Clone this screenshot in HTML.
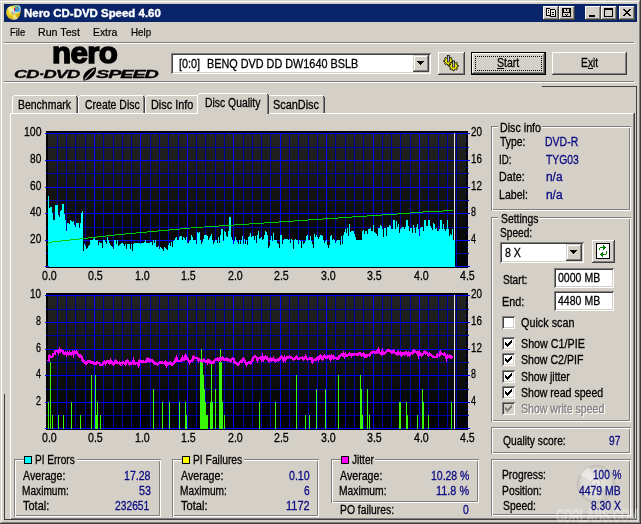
<!DOCTYPE html>
<html lang="en"><head><meta charset="utf-8"><title>Nero CD-DVD Speed 4.60</title>
<style>
html,body{margin:0;padding:0;background:#D4D0C8}
body{width:641px;height:524px;overflow:hidden}
#win{will-change:transform;position:relative;width:641px;height:524px;background:#D4D0C8;overflow:hidden;font-family:"Liberation Sans",sans-serif}
#win div{position:absolute;box-sizing:border-box}
.t{position:absolute;white-space:pre;transform-origin:0 0;display:block;color:#000}
.ms{font-size:12.5px;line-height:16px;height:16px;-webkit-text-stroke:.3px}
.tah{font-size:11px;line-height:14px;height:14px;-webkit-text-stroke:.2px}
.tahb{font-size:11px;font-weight:bold;line-height:14px;height:14px;-webkit-text-stroke:.35px #fff}
.ax{font-size:12.5px;line-height:16px;height:16px;-webkit-text-stroke:.3px}
svg{position:absolute;display:block}
.wm{font-size:19px;font-weight:bold;line-height:22px;height:22px;color:#fff;opacity:.3;letter-spacing:0;-webkit-text-stroke:.6px #fff}
.nero{font-size:30px;font-weight:bold;line-height:33px;height:33px;letter-spacing:-0.6px;-webkit-text-stroke:1.5px #000}
.cds{font-size:11px;font-weight:bold;font-style:italic;line-height:14px;height:14px;letter-spacing:-.6px;-webkit-text-stroke:.3px}
</style></head>
<body>
<div id="win">
<div style="left:0px;top:1px;width:641px;height:1px;background:#fff"></div>
<div style="left:1px;top:1px;width:1px;height:522px;background:#fff"></div>
<div style="left:639px;top:1px;width:1px;height:522px;background:#808080"></div>
<div style="left:1px;top:522px;width:639px;height:1px;background:#808080"></div>
<div style="left:640px;top:0px;width:1px;height:524px;background:#404040"></div>
<div style="left:0px;top:523px;width:641px;height:1px;background:#404040"></div>
<div style="left:4px;top:4px;width:633px;height:18px;background:#0A246A"></div>
<span id="t0" class="t tahb" style="left:23.60px;top:6px;color:#fff;transform:scaleX(1.0411);">Nero CD-DVD Speed 4.60</span>
<svg width="18" height="18" viewBox="0 0 18 18" style="left:5px;top:4px">
<defs><radialGradient id="gd" cx="0.4" cy="0.4" r="0.7"><stop offset="0" stop-color="#fff6a8"/><stop offset="0.45" stop-color="#e8d020"/><stop offset="1" stop-color="#b89808"/></radialGradient></defs>
<circle cx="8.3" cy="8.6" r="7.2" fill="url(#gd)"/>
<path d="M8.3,8.6L2,5A7.2,7.2 0 0 1 6,2Z" fill="#fffbd0" opacity=".7"/>
<path d="M8.3,8.6L13,14.5A7.2,7.2 0 0 1 8,15.8Z" fill="#fff8c0" opacity=".6"/>
<circle cx="8.3" cy="8.6" r="1.6" fill="#c8c8d0" stroke="#8a8a98" stroke-width=".6"/>
<circle cx="11.7" cy="5.1" r="4" fill="#f4f4f4"/>
<circle cx="11.9" cy="5.3" r="3" fill="#28a0e8"/>
<path d="M9.2,3.2A3.2,3.2 0 0 1 13.6,2.6" stroke="#40b040" stroke-width="1.2" fill="none"/>
<path d="M9.6,6.8L9.4,3.6" stroke="#d01010" stroke-width="1.2"/>
<path d="M10.6,2.8L13.4,6.6" stroke="#e06060" stroke-width=".9"/>
<circle cx="9.3" cy="3.4" r=".8" fill="#f0e020"/>
</svg>
<div style="left:543px;top:6px;width:16px;height:14px;background:#D4D0C8;box-shadow:inset -1px -1px 0 #404040, inset 1px 1px 0 #fff, inset -2px -2px 0 #808080, inset 2px 2px 0 #D4D0C8"><svg width="16" height="14" viewBox="0 0 16 14" style="left:0;top:0" shape-rendering="crispEdges"><path d="M3.5,2.500h3l1,1v6h-4zM7.5,3.500h4l1,1v6h-5z" fill="#E8E6E0" stroke="#000" stroke-width="1"/><rect x="5" y="4" width="1" height="1"/><rect x="5" y="6" width="1" height="1"/><rect x="9" y="6" width="2" height="1"/><rect x="9" y="8" width="2" height="1"/></svg></div>
<div style="left:559px;top:6px;width:16px;height:14px;background:#D4D0C8;box-shadow:inset -1px -1px 0 #404040, inset 1px 1px 0 #fff, inset -2px -2px 0 #808080, inset 2px 2px 0 #D4D0C8"><svg width="16" height="14" viewBox="0 0 16 14" style="left:0;top:0" shape-rendering="crispEdges"><rect x="3" y="2" width="9" height="9" fill="#000"/><rect x="5" y="3" width="5" height="3" fill="#D4D0C8"/><rect x="7" y="3" width="1" height="2" fill="#000"/><rect x="4" y="7" width="7" height="3" fill="#D4D0C8"/><rect x="6" y="8" width="1" height="1" fill="#000"/><rect x="7" y="9" width="1" height="1" fill="#000"/><rect x="8" y="8" width="1" height="1" fill="#000"/></svg></div>
<div style="left:585px;top:6px;width:16px;height:14px;background:#D4D0C8;box-shadow:inset -1px -1px 0 #404040, inset 1px 1px 0 #fff, inset -2px -2px 0 #808080, inset 2px 2px 0 #D4D0C8"><svg width="16" height="14" viewBox="0 0 16 14" style="left:0;top:0" shape-rendering="crispEdges"><rect x="4" y="9" width="6" height="2" fill="#000"/></svg></div>
<div style="left:601px;top:6px;width:16px;height:14px;background:#D4D0C8;box-shadow:inset -1px -1px 0 #404040, inset 1px 1px 0 #fff, inset -2px -2px 0 #808080, inset 2px 2px 0 #D4D0C8"><svg width="16" height="14" viewBox="0 0 16 14" style="left:0;top:0" shape-rendering="crispEdges"><rect x="3" y="2" width="9" height="9" fill="#000"/><rect x="4" y="4" width="7" height="6" fill="#D4D0C8"/></svg></div>
<div style="left:619px;top:6px;width:16px;height:14px;background:#D4D0C8;box-shadow:inset -1px -1px 0 #404040, inset 1px 1px 0 #fff, inset -2px -2px 0 #808080, inset 2px 2px 0 #D4D0C8"><svg width="16" height="14" viewBox="0 0 16 14" style="left:0;top:0" shape-rendering="crispEdges"><path d="M4,3h2v1h1v1h2v-1h1v-1h2v1h-1v1h-1v1h-1v1h1v1h1v1h1v1h-2v-1h-1v-1h-2v1h-1v1h-2v-1h1v-1h1v-1h1v-1h-1v-1h-1v-1h-1z" fill="#000"/></svg></div>
<span id="t1" class="t nero" style="left:51.96px;top:35.8px;transform:scaleX(1.0406);">nero</span>
<span id="t2" class="t cds" style="left:14.20px;top:66.8px;transform:scaleX(1.6645);">CD·DVD</span>
<svg width="17" height="17" viewBox="0 0 16 16" style="left:80.5px;top:65.5px"><path d="M2.5,13.8C0.5,9 5,2.5 13.8,1.2C15.5,6 11,13 2.5,13.8Z" fill="#000"/><path d="M3.5,12.500L12.500,3" stroke="#D4D0C8" stroke-width="1.1"/></svg>
<span id="t3" class="t cds" style="left:96.30px;top:66.8px;transform:scaleX(1.8027);">SPEED</span>
<span id="t4" class="t tah" style="left:10.00px;top:25px;transform:scaleX(0.8519);">File</span>
<span id="t5" class="t tah" style="left:38.00px;top:25px;transform:scaleX(0.9688);">Run Test</span>
<span id="t6" class="t tah" style="left:93.00px;top:25px;transform:scaleX(0.9414);">Extra</span>
<span id="t7" class="t tah" style="left:131.00px;top:25px;transform:scaleX(0.8887);">Help</span>
<div style="left:4px;top:42px;width:630px;height:1px;background:#808080"></div>
<div style="left:4px;top:43px;width:631px;height:1px;background:#fff"></div>
<div style="left:4px;top:81px;width:630px;height:1px;background:#808080"></div>
<div style="left:4px;top:82px;width:631px;height:1px;background:#fff"></div>
<div style="left:171px;top:53px;width:260px;height:21px;background:#fff;box-shadow:inset 1px 1px 0 #808080, inset -1px -1px 0 #fff, inset 2px 2px 0 #404040, inset -2px -2px 0 #D4D0C8"></div>
<div style="left:413px;top:55px;width:16px;height:17px;background:#D4D0C8;box-shadow:inset -1px -1px 0 #404040, inset 1px 1px 0 #D4D0C8, inset -2px -2px 0 #808080, inset 2px 2px 0 #fff"><svg width="7" height="4" viewBox="0 0 7 4" style="left:4px;top:6px" shape-rendering="crispEdges"><path d="M0,0h7v1h-1v1h-1v1h-1v1h-1v-1h-1v-1h-1v-1h-1z" fill="#000"/></svg></div>
<span id="t8" class="t ms" style="left:178.70px;top:56px;transform:scaleX(0.8637);">[0:0]</span>
<span id="t9" class="t ms" style="left:207.43px;top:56px;transform:scaleX(0.8669);">BENQ DVD DD DW1640 BSLB</span>
<div style="left:438px;top:52px;width:27px;height:23px;background:#D4D0C8;box-shadow:inset -1px -1px 0 #404040, inset 1px 1px 0 #fff, inset -2px -2px 0 #808080, inset 2px 2px 0 #D4D0C8"><svg width="27" height="23" viewBox="438 52 27 23" style="left:0;top:0"><polygon points="452.87,60.50 452.87,61.50 451.48,61.92 451.20,62.60 451.89,63.88 451.18,64.59 449.90,63.90 449.22,64.18 448.80,65.57 447.80,65.57 447.38,64.18 446.70,63.90 445.42,64.59 444.71,63.88 445.40,62.60 445.12,61.92 443.73,61.50 443.73,60.50 445.12,60.08 445.40,59.40 444.71,58.12 445.42,57.41 446.70,58.10 447.38,57.82 447.80,56.43 448.80,56.43 449.22,57.82 449.90,58.10 451.18,57.41 451.89,58.12 451.20,59.40 451.48,60.08" fill="#f8f400" stroke="#000" stroke-width="0.9" stroke-linejoin="round"/><polygon points="458.37,65.47 458.37,66.53 456.92,66.96 456.63,67.67 457.35,69.00 456.60,69.75 455.27,69.03 454.56,69.32 454.13,70.77 453.07,70.77 452.64,69.32 451.93,69.03 450.60,69.75 449.85,69.00 450.57,67.67 450.28,66.96 448.83,66.53 448.83,65.47 450.28,65.04 450.57,64.33 449.85,63.00 450.60,62.25 451.93,62.97 452.64,62.68 453.07,61.23 454.13,61.23 454.56,62.68 455.27,62.97 456.60,62.25 457.35,63.00 456.63,64.33 456.92,65.04" fill="#f8f400" stroke="#000" stroke-width="0.9" stroke-linejoin="round"/><rect x="447.3" y="55.500" width="2.2" height="6.5" fill="#b8b8d0" stroke="#000" stroke-width=".7"/><rect x="452.500" y="61" width="2.2" height="6" fill="#b8b8d0" stroke="#000" stroke-width=".7"/></svg></div>
<div style="left:471px;top:52px;width:75px;height:23px;background:#000"></div>
<div style="left:472px;top:53px;width:73px;height:21px;background:#D4D0C8;box-shadow:inset -1px -1px 0 #404040, inset 1px 1px 0 #fff, inset -2px -2px 0 #808080, inset 2px 2px 0 #D4D0C8"><div style="left:3px;top:3px;width:67px;height:15px;border:1px dotted #000"></div></div>
<span id="t10" class="t ms" style="left:496.80px;top:55px;transform:scaleX(0.8431);"><u>S</u>tart</span>
<div style="left:552px;top:52px;width:75px;height:23px;background:#D4D0C8;box-shadow:inset -1px -1px 0 #404040, inset 1px 1px 0 #fff, inset -2px -2px 0 #808080, inset 2px 2px 0 #D4D0C8"></div>
<span id="t11" class="t ms" style="left:580.88px;top:55px;transform:scaleX(0.8250);">E<u>x</u>it</span>
<div style="left:542px;top:86px;width:95px;height:1px;background:#404040"></div>
<div style="left:636px;top:86px;width:1px;height:434px;background:#404040"></div>
<div style="left:4px;top:394px;width:1px;height:126px;background:#404040"></div>
<div style="left:4px;top:519px;width:633px;height:1px;background:#404040"></div>
<div style="left:10px;top:113px;width:1px;height:406px;background:#fff"></div>
<div style="left:10px;top:113px;width:187px;height:1px;background:#fff"></div>
<div style="left:268px;top:113px;width:365px;height:1px;background:#fff"></div>
<div style="left:633px;top:114px;width:1px;height:405px;background:#808080"></div>
<div style="left:634px;top:113px;width:1px;height:407px;background:#404040"></div>
<div style="left:11px;top:518px;width:623px;height:1px;background:#808080"></div>
<div style="left:10px;top:519px;width:625px;height:1px;background:#404040"></div>
<div style="left:12px;top:97px;width:1px;height:16px;background:#fff"></div>
<div style="left:13px;top:96px;width:1px;height:1px;background:#fff"></div>
<div style="left:14px;top:95px;width:62px;height:1px;background:#fff"></div>
<div style="left:76px;top:97px;width:1px;height:16px;background:#808080"></div>
<div style="left:77px;top:97px;width:1px;height:16px;background:#404040"></div>
<div style="left:76px;top:96px;width:1px;height:1px;background:#404040"></div>
<div style="left:78px;top:97px;width:1px;height:16px;background:#fff"></div>
<div style="left:79px;top:96px;width:1px;height:1px;background:#fff"></div>
<div style="left:80px;top:95px;width:63px;height:1px;background:#fff"></div>
<div style="left:143px;top:97px;width:1px;height:16px;background:#808080"></div>
<div style="left:144px;top:97px;width:1px;height:16px;background:#404040"></div>
<div style="left:143px;top:96px;width:1px;height:1px;background:#404040"></div>
<div style="left:145px;top:97px;width:1px;height:16px;background:#fff"></div>
<div style="left:146px;top:96px;width:1px;height:1px;background:#fff"></div>
<div style="left:147px;top:95px;width:51px;height:1px;background:#fff"></div>
<div style="left:198px;top:97px;width:1px;height:16px;background:#808080"></div>
<div style="left:199px;top:97px;width:1px;height:16px;background:#404040"></div>
<div style="left:198px;top:96px;width:1px;height:1px;background:#404040"></div>
<div style="left:266px;top:97px;width:1px;height:16px;background:#fff"></div>
<div style="left:267px;top:96px;width:1px;height:1px;background:#fff"></div>
<div style="left:268px;top:95px;width:55px;height:1px;background:#fff"></div>
<div style="left:323px;top:97px;width:1px;height:16px;background:#808080"></div>
<div style="left:324px;top:97px;width:1px;height:16px;background:#404040"></div>
<div style="left:323px;top:96px;width:1px;height:1px;background:#404040"></div>
<div style="left:197px;top:93px;width:72px;height:21px;background:#D4D0C8"></div>
<div style="left:197px;top:95px;width:1px;height:19px;background:#fff"></div>
<div style="left:198px;top:94px;width:1px;height:1px;background:#fff"></div>
<div style="left:199px;top:93px;width:68px;height:1px;background:#fff"></div>
<div style="left:267px;top:95px;width:1px;height:19px;background:#808080"></div>
<div style="left:268px;top:95px;width:1px;height:19px;background:#404040"></div>
<div style="left:267px;top:94px;width:1px;height:1px;background:#404040"></div>
<span id="t12" class="t ms" style="left:17.66px;top:97px;transform:scaleX(0.8369);">Benchmark</span>
<span id="t13" class="t ms" style="left:84.60px;top:97px;transform:scaleX(0.8379);">Create Disc</span>
<span id="t14" class="t ms" style="left:150.83px;top:97px;transform:scaleX(0.8705);">Disc Info</span>
<span id="t15" class="t ms" style="left:204.87px;top:95px;transform:scaleX(0.8309);">Disc Quality</span>
<span id="t16" class="t ms" style="left:273.40px;top:97px;transform:scaleX(0.8716);">ScanDisc</span>
<svg width="641" height="524" viewBox="0 0 641 524" style="left:0;top:0" shape-rendering="crispEdges">
<defs><linearGradient id="cg" x1="0" y1="0" x2="0" y2="1"><stop offset="0" stop-color="#232423"/><stop offset="1" stop-color="#000"/></linearGradient></defs>
<rect x="46" y="131" width="422" height="137" fill="#000"/>
<rect x="48" y="133" width="418" height="134" fill="url(#cg)"/>
<rect x="57" y="133" width="1" height="134" fill="#0000A8"/>
<rect x="66" y="133" width="1" height="134" fill="#0000A8"/>
<rect x="75" y="133" width="1" height="134" fill="#0000A8"/>
<rect x="85" y="133" width="1" height="134" fill="#0000A8"/>
<rect x="94" y="133" width="1" height="134" fill="#0000FF"/>
<rect x="103" y="133" width="1" height="134" fill="#0000A8"/>
<rect x="113" y="133" width="1" height="134" fill="#0000A8"/>
<rect x="122" y="133" width="1" height="134" fill="#0000A8"/>
<rect x="131" y="133" width="1" height="134" fill="#0000A8"/>
<rect x="140" y="133" width="1" height="134" fill="#0000FF"/>
<rect x="150" y="133" width="1" height="134" fill="#0000A8"/>
<rect x="159" y="133" width="1" height="134" fill="#0000A8"/>
<rect x="168" y="133" width="1" height="134" fill="#0000A8"/>
<rect x="178" y="133" width="1" height="134" fill="#0000A8"/>
<rect x="187" y="133" width="1" height="134" fill="#0000FF"/>
<rect x="196" y="133" width="1" height="134" fill="#0000A8"/>
<rect x="205" y="133" width="1" height="134" fill="#0000A8"/>
<rect x="215" y="133" width="1" height="134" fill="#0000A8"/>
<rect x="224" y="133" width="1" height="134" fill="#0000A8"/>
<rect x="233" y="133" width="1" height="134" fill="#0000FF"/>
<rect x="243" y="133" width="1" height="134" fill="#0000A8"/>
<rect x="252" y="133" width="1" height="134" fill="#0000A8"/>
<rect x="261" y="133" width="1" height="134" fill="#0000A8"/>
<rect x="270" y="133" width="1" height="134" fill="#0000A8"/>
<rect x="280" y="133" width="1" height="134" fill="#0000FF"/>
<rect x="289" y="133" width="1" height="134" fill="#0000A8"/>
<rect x="298" y="133" width="1" height="134" fill="#0000A8"/>
<rect x="308" y="133" width="1" height="134" fill="#0000A8"/>
<rect x="317" y="133" width="1" height="134" fill="#0000A8"/>
<rect x="326" y="133" width="1" height="134" fill="#0000FF"/>
<rect x="335" y="133" width="1" height="134" fill="#0000A8"/>
<rect x="345" y="133" width="1" height="134" fill="#0000A8"/>
<rect x="354" y="133" width="1" height="134" fill="#0000A8"/>
<rect x="363" y="133" width="1" height="134" fill="#0000A8"/>
<rect x="373" y="133" width="1" height="134" fill="#0000FF"/>
<rect x="382" y="133" width="1" height="134" fill="#0000A8"/>
<rect x="391" y="133" width="1" height="134" fill="#0000A8"/>
<rect x="400" y="133" width="1" height="134" fill="#0000A8"/>
<rect x="410" y="133" width="1" height="134" fill="#0000A8"/>
<rect x="419" y="133" width="1" height="134" fill="#0000FF"/>
<rect x="428" y="133" width="1" height="134" fill="#0000A8"/>
<rect x="438" y="133" width="1" height="134" fill="#0000A8"/>
<rect x="447" y="133" width="1" height="134" fill="#0000A8"/>
<rect x="456" y="133" width="1" height="134" fill="#0000A8"/>
<rect x="45" y="133" width="425" height="1" fill="#0000FF"/>
<rect x="46" y="147" width="423" height="1" fill="#0000A8"/>
<rect x="45" y="160" width="425" height="1" fill="#0000FF"/>
<rect x="46" y="173" width="423" height="1" fill="#0000A8"/>
<rect x="45" y="187" width="425" height="1" fill="#0000FF"/>
<rect x="46" y="200" width="423" height="1" fill="#0000A8"/>
<rect x="45" y="213" width="425" height="1" fill="#0000FF"/>
<rect x="46" y="227" width="423" height="1" fill="#0000A8"/>
<rect x="45" y="240" width="425" height="1" fill="#0000FF"/>
<rect x="46" y="253" width="423" height="1" fill="#0000A8"/>
<rect x="45" y="266" width="425" height="1" fill="#0000FF"/>
<rect x="466" y="260" width="2" height="1" fill="#0000A8"/>
<rect x="466" y="247" width="2" height="1" fill="#0000A8"/>
<rect x="466" y="233" width="2" height="1" fill="#0000A8"/>
<rect x="466" y="220" width="2" height="1" fill="#0000A8"/>
<rect x="466" y="207" width="2" height="1" fill="#0000A8"/>
<rect x="466" y="193" width="2" height="1" fill="#0000A8"/>
<rect x="466" y="180" width="2" height="1" fill="#0000A8"/>
<rect x="466" y="167" width="2" height="1" fill="#0000A8"/>
<rect x="466" y="153" width="2" height="1" fill="#0000A8"/>
<rect x="466" y="140" width="2" height="1" fill="#0000A8"/>
<rect x="454" y="133" width="1" height="134" fill="#E8E8E8"/>
<path d="M48,267V196H49V208H50V207H51V207H52V213H53V220H54V220H55V205H56V205H57V205H58V215H59V217H60V211H61V210H62V204H63V204H64V214H65V220H66V231H67V223H68V223H69V224H70V220H71V221H72V222H73V221H74V225H75V227H76V223H77V223H78V223H79V228H80V223H81V213H82V211H83V251H84V244H85V246H86V249H87V248H88V246H89V245H90V240H91V240H92V240H93V239H94V238H95V240H96V240H97V240H98V245H99V242H100V243H101V243H102V248H103V240H104V240H105V242H106V244H107V237H108V240H109V243H110V245H111V246H112V247H113V249H114V240H115V240H116V244H117V240H118V246H119V245H120V244H121V243H122V243H123V244H124V246H125V244H126V249H127V244H128V244H129V244H130V249H131V244H132V251H133V244H134V243H135V243H136V243H137V243H138V243H139V243H140V244H141V243H142V243H143V243H144V242H145V240H146V243H147V243H148V243H149V243H150V242H151V242H152V245H153V240H154V243H155V240H156V247H157V247H158V246H159V249H160V247H161V248H162V249H163V251H164V247H165V248H166V249H167V250H168V245H169V243H170V246H171V242H172V247H173V241H174V240H175V238H176V237H177V240H178V240H179V237H180V236H181V236H182V240H183V237H184V238H185V240H186V237H187V243H188V243H189V241H190V240H191V235H192V237H193V240H194V240H195V240H196V244H197V232H198V233H199V232H200V240H201V244H202V242H203V239H204V235H205V235H206V235H207V236H208V240H209V238H210V236H211V234H212V240H213V244H214V242H215V240H216V240H217V243H218V237H219V243H220V235H221V229H222V229H223V241H224V231H225V232H226V236H227V237H228V231H229V217H230V217H231V237H232V240H233V244H234V241H235V237H236V240H237V242H238V244H239V240H240V244H241V240H242V236H243V244H244V239H245V244H246V240H247V245H248V237H249V236H250V233H251V237H252V236H253V236H254V240H255V236H256V243H257V235H258V231H259V239H260V238H261V237H262V240H263V239H264V235H265V231H266V232H267V235H268V248H269V246H270V240H271V236H272V241H273V233H274V240H275V240H276V240H277V243H278V244H279V248H280V235H281V235H282V244H283V240H284V239H285V239H286V239H287V239H288V240H289V239H290V243H291V239H292V240H293V249H294V240H295V239H296V240H297V240H298V244H299V240H300V241H301V248H302V241H303V244H304V243H305V241H306V236H307V235H308V240H309V240H310V236H311V241H312V244H313V248H314V234H315V237H316V235H317V237H318V239H319V237H320V235H321V235H322V236H323V240H324V243H325V241H326V240H327V245H328V248H329V245H330V236H331V235H332V240H333V239H334V240H335V243H336V241H337V240H338V240H339V240H340V245H341V236H342V244H343V235H344V232H345V229H346V233H347V228H348V236H349V224H350V232H351V231H352V231H353V231H354V234H355V237H356V240H357V240H358V240H359V240H360V240H361V240H362V231H363V230H364V234H365V231H366V231H367V234H368V229H369V229H370V228H371V231H372V231H373V225H374V232H375V233H376V234H377V236H378V228H379V228H380V225H381V226H382V229H383V237H384V228H385V228H386V236H387V227H388V227H389V225H390V226H391V229H392V229H393V220H394V220H395V229H396V221H397V227H398V224H399V233H400V229H401V228H402V227H403V227H404V229H405V227H406V220H407V220H408V226H409V231H410V228H411V228H412V233H413V225H414V228H415V233H416V227H417V224H418V229H419V236H420V228H421V227H422V227H423V231H424V220H425V220H426V226H427V226H428V220H429V220H430V226H431V228H432V230H433V223H434V224H435V229H436V228H437V231H438V231H439V229H440V220H441V220H442V229H443V224H444V229H445V231H446V229H447V220H448V229H449V236H450V234H451V235H452V229H453V240H454V240H455V267Z" fill="#00FFFF"/>
<rect x="45" y="266" width="4" height="1" fill="#0000FF"/>
<polyline points="47.7,244.9 48.6,243.2 50.0,242.3 59.0,241.2 120.0,234.5 196.0,227.5 272.0,222.5 348.0,217.3 400.0,213.8 428.0,211.6 453.0,210.6" fill="none" stroke="#00CC00" stroke-width="1" shape-rendering="crispEdges"/>
<rect x="46" y="293" width="422" height="137" fill="#000"/>
<rect x="48" y="295" width="418" height="134" fill="url(#cg)"/>
<rect x="57" y="295" width="1" height="134" fill="#0000A8"/>
<rect x="66" y="295" width="1" height="134" fill="#0000A8"/>
<rect x="75" y="295" width="1" height="134" fill="#0000A8"/>
<rect x="85" y="295" width="1" height="134" fill="#0000A8"/>
<rect x="94" y="295" width="1" height="134" fill="#0000FF"/>
<rect x="103" y="295" width="1" height="134" fill="#0000A8"/>
<rect x="113" y="295" width="1" height="134" fill="#0000A8"/>
<rect x="122" y="295" width="1" height="134" fill="#0000A8"/>
<rect x="131" y="295" width="1" height="134" fill="#0000A8"/>
<rect x="140" y="295" width="1" height="134" fill="#0000FF"/>
<rect x="150" y="295" width="1" height="134" fill="#0000A8"/>
<rect x="159" y="295" width="1" height="134" fill="#0000A8"/>
<rect x="168" y="295" width="1" height="134" fill="#0000A8"/>
<rect x="178" y="295" width="1" height="134" fill="#0000A8"/>
<rect x="187" y="295" width="1" height="134" fill="#0000FF"/>
<rect x="196" y="295" width="1" height="134" fill="#0000A8"/>
<rect x="205" y="295" width="1" height="134" fill="#0000A8"/>
<rect x="215" y="295" width="1" height="134" fill="#0000A8"/>
<rect x="224" y="295" width="1" height="134" fill="#0000A8"/>
<rect x="233" y="295" width="1" height="134" fill="#0000FF"/>
<rect x="243" y="295" width="1" height="134" fill="#0000A8"/>
<rect x="252" y="295" width="1" height="134" fill="#0000A8"/>
<rect x="261" y="295" width="1" height="134" fill="#0000A8"/>
<rect x="270" y="295" width="1" height="134" fill="#0000A8"/>
<rect x="280" y="295" width="1" height="134" fill="#0000FF"/>
<rect x="289" y="295" width="1" height="134" fill="#0000A8"/>
<rect x="298" y="295" width="1" height="134" fill="#0000A8"/>
<rect x="308" y="295" width="1" height="134" fill="#0000A8"/>
<rect x="317" y="295" width="1" height="134" fill="#0000A8"/>
<rect x="326" y="295" width="1" height="134" fill="#0000FF"/>
<rect x="335" y="295" width="1" height="134" fill="#0000A8"/>
<rect x="345" y="295" width="1" height="134" fill="#0000A8"/>
<rect x="354" y="295" width="1" height="134" fill="#0000A8"/>
<rect x="363" y="295" width="1" height="134" fill="#0000A8"/>
<rect x="373" y="295" width="1" height="134" fill="#0000FF"/>
<rect x="382" y="295" width="1" height="134" fill="#0000A8"/>
<rect x="391" y="295" width="1" height="134" fill="#0000A8"/>
<rect x="400" y="295" width="1" height="134" fill="#0000A8"/>
<rect x="410" y="295" width="1" height="134" fill="#0000A8"/>
<rect x="419" y="295" width="1" height="134" fill="#0000FF"/>
<rect x="428" y="295" width="1" height="134" fill="#0000A8"/>
<rect x="438" y="295" width="1" height="134" fill="#0000A8"/>
<rect x="447" y="295" width="1" height="134" fill="#0000A8"/>
<rect x="456" y="295" width="1" height="134" fill="#0000A8"/>
<rect x="45" y="295" width="425" height="1" fill="#0000FF"/>
<rect x="46" y="309" width="423" height="1" fill="#0000A8"/>
<rect x="45" y="322" width="425" height="1" fill="#0000FF"/>
<rect x="46" y="335" width="423" height="1" fill="#0000A8"/>
<rect x="45" y="349" width="425" height="1" fill="#0000FF"/>
<rect x="46" y="362" width="423" height="1" fill="#0000A8"/>
<rect x="45" y="375" width="425" height="1" fill="#0000FF"/>
<rect x="46" y="389" width="423" height="1" fill="#0000A8"/>
<rect x="45" y="402" width="425" height="1" fill="#0000FF"/>
<rect x="46" y="415" width="423" height="1" fill="#0000A8"/>
<rect x="45" y="428" width="425" height="1" fill="#0000FF"/>
<rect x="466" y="422" width="2" height="1" fill="#0000A8"/>
<rect x="466" y="409" width="2" height="1" fill="#0000A8"/>
<rect x="466" y="395" width="2" height="1" fill="#0000A8"/>
<rect x="466" y="382" width="2" height="1" fill="#0000A8"/>
<rect x="466" y="369" width="2" height="1" fill="#0000A8"/>
<rect x="466" y="355" width="2" height="1" fill="#0000A8"/>
<rect x="466" y="342" width="2" height="1" fill="#0000A8"/>
<rect x="466" y="329" width="2" height="1" fill="#0000A8"/>
<rect x="466" y="315" width="2" height="1" fill="#0000A8"/>
<rect x="466" y="302" width="2" height="1" fill="#0000A8"/>
<rect x="454" y="295" width="1" height="134" fill="#E8E8E8"/>
<rect x="48" y="402" width="1" height="27" fill="#38F808"/>
<rect x="50" y="362" width="1" height="67" fill="#38F808"/>
<rect x="52" y="415" width="1" height="14" fill="#38F808"/>
<rect x="58" y="415" width="1" height="14" fill="#38F808"/>
<rect x="63" y="415" width="1" height="14" fill="#38F808"/>
<rect x="71" y="402" width="1" height="27" fill="#38F808"/>
<rect x="80" y="415" width="1" height="14" fill="#38F808"/>
<rect x="91" y="375" width="1" height="54" fill="#38F808"/>
<rect x="95" y="375" width="1" height="54" fill="#38F808"/>
<rect x="96" y="415" width="1" height="14" fill="#38F808"/>
<rect x="97" y="402" width="1" height="27" fill="#38F808"/>
<rect x="100" y="415" width="1" height="14" fill="#38F808"/>
<rect x="153" y="389" width="1" height="40" fill="#38F808"/>
<rect x="162" y="402" width="1" height="27" fill="#38F808"/>
<rect x="169" y="402" width="1" height="27" fill="#38F808"/>
<rect x="179" y="402" width="1" height="27" fill="#38F808"/>
<rect x="185" y="402" width="1" height="27" fill="#38F808"/>
<rect x="186" y="415" width="1" height="14" fill="#38F808"/>
<rect x="200" y="362" width="1" height="67" fill="#38F808"/>
<rect x="201" y="349" width="1" height="80" fill="#38F808"/>
<rect x="202" y="362" width="1" height="67" fill="#38F808"/>
<rect x="203" y="375" width="1" height="54" fill="#38F808"/>
<rect x="204" y="389" width="1" height="40" fill="#38F808"/>
<rect x="205" y="402" width="1" height="27" fill="#38F808"/>
<rect x="206" y="415" width="1" height="14" fill="#38F808"/>
<rect x="207" y="415" width="1" height="14" fill="#38F808"/>
<rect x="210" y="402" width="1" height="27" fill="#38F808"/>
<rect x="211" y="362" width="1" height="67" fill="#38F808"/>
<rect x="212" y="402" width="1" height="27" fill="#38F808"/>
<rect x="215" y="389" width="1" height="40" fill="#38F808"/>
<rect x="219" y="362" width="1" height="67" fill="#38F808"/>
<rect x="220" y="349" width="1" height="80" fill="#38F808"/>
<rect x="221" y="362" width="1" height="67" fill="#38F808"/>
<rect x="222" y="402" width="1" height="27" fill="#38F808"/>
<rect x="224" y="415" width="1" height="14" fill="#38F808"/>
<rect x="259" y="402" width="1" height="27" fill="#38F808"/>
<rect x="275" y="402" width="1" height="27" fill="#38F808"/>
<rect x="296" y="375" width="1" height="54" fill="#38F808"/>
<rect x="305" y="415" width="1" height="14" fill="#38F808"/>
<rect x="309" y="415" width="1" height="14" fill="#38F808"/>
<rect x="316" y="389" width="1" height="40" fill="#38F808"/>
<rect x="325" y="389" width="1" height="40" fill="#38F808"/>
<rect x="338" y="375" width="1" height="54" fill="#38F808"/>
<rect x="360" y="375" width="1" height="54" fill="#38F808"/>
<rect x="361" y="389" width="1" height="40" fill="#38F808"/>
<rect x="362" y="415" width="1" height="14" fill="#38F808"/>
<rect x="367" y="389" width="1" height="40" fill="#38F808"/>
<rect x="369" y="415" width="1" height="14" fill="#38F808"/>
<rect x="399" y="402" width="1" height="27" fill="#38F808"/>
<rect x="400" y="402" width="1" height="27" fill="#38F808"/>
<rect x="406" y="402" width="1" height="27" fill="#38F808"/>
<rect x="407" y="415" width="1" height="14" fill="#38F808"/>
<rect x="417" y="415" width="1" height="14" fill="#38F808"/>
<rect x="422" y="389" width="1" height="40" fill="#38F808"/>
<rect x="423" y="402" width="1" height="27" fill="#38F808"/>
<rect x="428" y="415" width="1" height="14" fill="#38F808"/>
<rect x="451" y="402" width="1" height="27" fill="#38F808"/>
<polyline points="48.5,361.4 49.5,356.0 50.5,357.0 51.5,357.1 52.5,356.6 53.5,354.2 54.5,354.2 55.5,350.9 56.5,351.0 57.5,351.4 58.5,352.7 59.5,349.6 60.5,351.3 61.5,350.3 62.5,351.1 63.5,353.4 64.5,353.9 65.5,352.6 66.5,354.6 67.5,353.2 68.5,354.2 69.5,352.2 70.5,353.3 71.5,354.1 72.5,352.3 73.5,354.7 74.5,351.5 75.5,352.3 76.5,351.6 77.5,353.7 78.5,355.0 79.5,356.6 80.5,355.5 81.5,356.7 82.5,359.9 83.5,361.0 84.5,361.9 85.5,363.4 86.5,363.8 87.5,361.3 88.5,361.3 89.5,361.2 90.5,362.1 91.5,363.0 92.5,362.7 93.5,362.6 94.5,364.2 95.5,364.1 96.5,362.5 97.5,362.4 98.5,362.9 99.5,363.4 100.5,364.9 101.5,364.9 102.5,364.5 103.5,363.1 104.5,362.0 105.5,363.5 106.5,361.9 107.5,361.1 108.5,361.6 109.5,363.2 110.5,360.7 111.5,362.4 112.5,362.3 113.5,364.2 114.5,363.4 115.5,360.5 116.5,361.2 117.5,363.2 118.5,362.9 119.5,362.5 120.5,364.4 121.5,364.5 122.5,362.3 123.5,362.7 124.5,363.4 125.5,364.4 126.5,361.2 127.5,360.4 128.5,362.3 129.5,364.1 130.5,362.8 131.5,363.6 132.5,362.8 133.5,360.5 134.5,363.8 135.5,363.2 136.5,362.7 137.5,362.7 138.5,364.8 139.5,361.1 140.5,362.2 141.5,361.8 142.5,361.1 143.5,361.3 144.5,362.1 145.5,361.6 146.5,361.7 147.5,358.6 148.5,358.9 149.5,361.3 150.5,360.9 151.5,360.2 152.5,360.4 153.5,362.6 154.5,362.4 155.5,363.9 156.5,363.7 157.5,364.4 158.5,363.7 159.5,363.0 160.5,362.2 161.5,362.5 162.5,362.4 163.5,363.2 164.5,363.4 165.5,362.1 166.5,365.3 167.5,363.2 168.5,363.7 169.5,363.8 170.5,362.5 171.5,364.0 172.5,364.8 173.5,363.3 174.5,362.3 175.5,359.8 176.5,357.8 177.5,361.2 178.5,360.9 179.5,361.1 180.5,360.8 181.5,360.3 182.5,357.8 183.5,359.9 184.5,359.0 185.5,356.0 186.5,358.3 187.5,358.3 188.5,360.2 189.5,362.5 190.5,361.1 191.5,360.3 192.5,360.5 193.5,357.1 194.5,358.0 195.5,358.2 196.5,358.1 197.5,358.4 198.5,360.7 199.5,359.4 200.5,360.6 201.5,361.1 202.5,361.5 203.5,359.8 204.5,360.5 205.5,361.3 206.5,361.5 207.5,362.7 208.5,360.2 209.5,360.3 210.5,362.9 211.5,362.7 212.5,362.5 213.5,362.3 214.5,360.6 215.5,359.4 216.5,359.8 217.5,359.0 218.5,360.0 219.5,359.0 220.5,360.1 221.5,358.2 222.5,357.3 223.5,359.2 224.5,359.9 225.5,359.2 226.5,358.3 227.5,360.2 228.5,359.4 229.5,360.7 230.5,361.4 231.5,359.7 232.5,358.7 233.5,359.2 234.5,362.2 235.5,362.8 236.5,363.8 237.5,364.3 238.5,364.3 239.5,362.3 240.5,361.3 241.5,361.9 242.5,359.8 243.5,359.0 244.5,360.4 245.5,362.8 246.5,364.4 247.5,362.8 248.5,362.6 249.5,362.7 250.5,363.4 251.5,361.3 252.5,360.3 253.5,357.6 254.5,357.1 255.5,356.2 256.5,357.8 257.5,360.0 258.5,358.1 259.5,358.2 260.5,357.7 261.5,359.6 262.5,356.8 263.5,359.7 264.5,358.3 265.5,356.7 266.5,357.2 267.5,359.7 268.5,359.0 269.5,360.8 270.5,358.8 271.5,360.3 272.5,359.8 273.5,358.4 274.5,360.8 275.5,361.8 276.5,360.0 277.5,359.3 278.5,360.2 279.5,359.2 280.5,358.2 281.5,356.8 282.5,357.9 283.5,360.0 284.5,357.9 285.5,359.7 286.5,358.4 287.5,357.1 288.5,357.3 289.5,356.6 290.5,357.0 291.5,357.9 292.5,358.3 293.5,359.6 294.5,358.5 295.5,358.5 296.5,357.1 297.5,358.8 298.5,358.9 299.5,358.5 300.5,358.1 301.5,358.2 302.5,357.8 303.5,359.1 304.5,357.9 305.5,356.5 306.5,358.2 307.5,359.4 308.5,359.3 309.5,358.3 310.5,358.8 311.5,358.2 312.5,361.8 313.5,360.1 314.5,359.3 315.5,360.0 316.5,359.0 317.5,358.0 318.5,359.6 319.5,356.5 320.5,355.6 321.5,357.9 322.5,359.1 323.5,356.5 324.5,355.9 325.5,357.5 326.5,357.5 327.5,357.5 328.5,355.9 329.5,356.4 330.5,358.9 331.5,355.6 332.5,356.0 333.5,358.4 334.5,357.4 335.5,357.9 336.5,358.1 337.5,359.0 338.5,358.4 339.5,356.1 340.5,355.4 341.5,354.7 342.5,355.3 343.5,353.3 344.5,356.3 345.5,354.2 346.5,355.4 347.5,355.4 348.5,355.3 349.5,353.5 350.5,353.8 351.5,355.8 352.5,354.0 353.5,354.4 354.5,354.6 355.5,353.8 356.5,354.2 357.5,354.9 358.5,353.5 359.5,353.9 360.5,353.3 361.5,355.4 362.5,354.3 363.5,353.8 364.5,356.1 365.5,356.9 366.5,354.9 367.5,355.4 368.5,354.9 369.5,355.6 370.5,353.8 371.5,352.6 372.5,352.7 373.5,351.4 374.5,352.4 375.5,352.9 376.5,351.4 377.5,352.5 378.5,349.9 379.5,352.3 380.5,353.8 381.5,354.3 382.5,351.3 383.5,354.1 384.5,353.5 385.5,352.6 386.5,351.3 387.5,350.4 388.5,350.6 389.5,350.3 390.5,351.0 391.5,352.4 392.5,352.5 393.5,351.0 394.5,352.5 395.5,353.4 396.5,353.0 397.5,353.9 398.5,352.2 399.5,353.3 400.5,352.5 401.5,355.3 402.5,354.4 403.5,353.2 404.5,354.2 405.5,352.2 406.5,352.8 407.5,354.6 408.5,353.3 409.5,354.9 410.5,352.9 411.5,353.2 412.5,353.3 413.5,350.8 414.5,351.7 415.5,351.2 416.5,352.7 417.5,352.2 418.5,355.3 419.5,352.5 420.5,354.7 421.5,355.4 422.5,354.2 423.5,353.4 424.5,352.0 425.5,353.3 426.5,352.4 427.5,353.3 428.5,354.9 429.5,353.3 430.5,354.4 431.5,355.4 432.5,356.1 433.5,356.8 434.5,357.2 435.5,356.9 436.5,357.0 437.5,354.4 438.5,354.9 439.5,355.4 440.5,352.3 441.5,353.7 442.5,354.1 443.5,354.5 444.5,353.6 445.5,355.7 446.5,358.3 447.5,355.4 448.5,356.4 449.5,355.4 450.5,357.5 451.5,356.8 452.5,358.2" fill="none" stroke="#FF00FF" stroke-width="2.4" stroke-linejoin="miter" shape-rendering="crispEdges"/>
</svg>
<span id="t17" class="t ax" style="left:23.80px;top:124px;transform:scaleX(0.8372);">100</span>
<span id="t18" class="t ax" style="left:30.00px;top:151px;transform:scaleX(0.8099);">80</span>
<span id="t19" class="t ax" style="left:30.00px;top:178px;transform:scaleX(0.8099);">60</span>
<span id="t20" class="t ax" style="left:30.00px;top:204px;transform:scaleX(0.8099);">40</span>
<span id="t21" class="t ax" style="left:30.00px;top:231px;transform:scaleX(0.8099);">20</span>
<span id="t22" class="t ax" style="left:30.00px;top:286px;transform:scaleX(0.7884);">10</span>
<span id="t23" class="t ax" style="left:36.00px;top:313px;transform:scaleX(0.7143);">8</span>
<span id="t24" class="t ax" style="left:36.00px;top:340px;transform:scaleX(0.7143);">6</span>
<span id="t25" class="t ax" style="left:36.00px;top:366px;transform:scaleX(0.7143);">4</span>
<span id="t26" class="t ax" style="left:36.00px;top:393px;transform:scaleX(0.7143);">2</span>
<span id="t27" class="t ax" style="left:471.00px;top:124px;transform:scaleX(0.7884);">20</span>
<span id="t28" class="t ax" style="left:471.00px;top:151px;transform:scaleX(0.7884);">16</span>
<span id="t29" class="t ax" style="left:471.00px;top:178px;transform:scaleX(0.7884);">12</span>
<span id="t30" class="t ax" style="left:471.00px;top:204px;transform:scaleX(0.7143);">8</span>
<span id="t31" class="t ax" style="left:471.00px;top:231px;transform:scaleX(0.7143);">4</span>
<span id="t32" class="t ax" style="left:471.00px;top:286px;transform:scaleX(0.7884);">20</span>
<span id="t33" class="t ax" style="left:471.00px;top:313px;transform:scaleX(0.7884);">16</span>
<span id="t34" class="t ax" style="left:471.00px;top:340px;transform:scaleX(0.7884);">12</span>
<span id="t35" class="t ax" style="left:471.00px;top:366px;transform:scaleX(0.7143);">8</span>
<span id="t36" class="t ax" style="left:471.00px;top:393px;transform:scaleX(0.7143);">4</span>
<span id="t37" class="t ax" style="left:41.80px;top:268px;transform:scaleX(0.8494);">0.0</span>
<span id="t38" class="t ax" style="left:88.30px;top:268px;transform:scaleX(0.8494);">0.5</span>
<span id="t39" class="t ax" style="left:134.80px;top:268px;transform:scaleX(0.8494);">1.0</span>
<span id="t40" class="t ax" style="left:181.30px;top:268px;transform:scaleX(0.8494);">1.5</span>
<span id="t41" class="t ax" style="left:227.80px;top:268px;transform:scaleX(0.8494);">2.0</span>
<span id="t42" class="t ax" style="left:274.30px;top:268px;transform:scaleX(0.8494);">2.5</span>
<span id="t43" class="t ax" style="left:320.80px;top:268px;transform:scaleX(0.8494);">3.0</span>
<span id="t44" class="t ax" style="left:367.30px;top:268px;transform:scaleX(0.8494);">3.5</span>
<span id="t45" class="t ax" style="left:413.80px;top:268px;transform:scaleX(0.8494);">4.0</span>
<span id="t46" class="t ax" style="left:460.30px;top:268px;transform:scaleX(0.8494);">4.5</span>
<span id="t47" class="t ax" style="left:41.80px;top:430px;transform:scaleX(0.8494);">0.0</span>
<span id="t48" class="t ax" style="left:88.30px;top:430px;transform:scaleX(0.8494);">0.5</span>
<span id="t49" class="t ax" style="left:134.80px;top:430px;transform:scaleX(0.8494);">1.0</span>
<span id="t50" class="t ax" style="left:181.30px;top:430px;transform:scaleX(0.8494);">1.5</span>
<span id="t51" class="t ax" style="left:227.80px;top:430px;transform:scaleX(0.8494);">2.0</span>
<span id="t52" class="t ax" style="left:274.30px;top:430px;transform:scaleX(0.8494);">2.5</span>
<span id="t53" class="t ax" style="left:320.80px;top:430px;transform:scaleX(0.8494);">3.0</span>
<span id="t54" class="t ax" style="left:367.30px;top:430px;transform:scaleX(0.8494);">3.5</span>
<span id="t55" class="t ax" style="left:413.80px;top:430px;transform:scaleX(0.8494);">4.0</span>
<span id="t56" class="t ax" style="left:460.30px;top:430px;transform:scaleX(0.8494);">4.5</span>
<div style="left:491px;top:126px;width:140px;height:85px;box-shadow:inset 1px 1px 0 #808080, inset -1px -1px 0 #fff, inset 2px 2px 0 #fff, inset -2px -2px 0 #808080"></div>
<div style="left:498px;top:126px;width:44px;height:2px;background:#D4D0C8"></div>
<span id="t57" class="t ms" style="left:499.94px;top:120px;transform:scaleX(0.8557);">Disc info</span>
<span id="t58" class="t ms" style="left:500.00px;top:134px;transform:scaleX(0.8306);">Type:</span>
<span id="t59" class="t ms" style="left:544.96px;top:134px;color:#0A0A82;transform:scaleX(0.8404);">DVD-R</span>
<span id="t60" class="t ms" style="left:499.22px;top:152px;transform:scaleX(0.7793);">ID:</span>
<span id="t61" class="t ms" style="left:546.00px;top:152px;color:#0A0A82;transform:scaleX(0.8248);">TYG03</span>
<span id="t62" class="t ms" style="left:498.74px;top:169px;transform:scaleX(0.8590);">Date:</span>
<span id="t63" class="t ms" style="left:545.80px;top:169px;color:#0A0A82;transform:scaleX(0.9527);">n/a</span>
<span id="t64" class="t ms" style="left:499.15px;top:187px;transform:scaleX(0.8470);">Label:</span>
<span id="t65" class="t ms" style="left:545.80px;top:187px;color:#0A0A82;transform:scaleX(0.9527);">n/a</span>
<div style="left:491px;top:217px;width:140px;height:205px;box-shadow:inset 1px 1px 0 #808080, inset -1px -1px 0 #fff, inset 2px 2px 0 #fff, inset -2px -2px 0 #808080"></div>
<div style="left:498px;top:217px;width:41px;height:2px;background:#D4D0C8"></div>
<span id="t66" class="t ms" style="left:500.80px;top:211px;transform:scaleX(0.8282);">Settings</span>
<span id="t67" class="t ms" style="left:500.00px;top:225px;transform:scaleX(0.8098);">Speed:</span>
<div style="left:500px;top:242px;width:84px;height:21px;background:#fff;box-shadow:inset 1px 1px 0 #808080, inset -1px -1px 0 #fff, inset 2px 2px 0 #404040, inset -2px -2px 0 #D4D0C8"></div>
<div style="left:566px;top:244px;width:16px;height:17px;background:#D4D0C8;box-shadow:inset -1px -1px 0 #404040, inset 1px 1px 0 #D4D0C8, inset -2px -2px 0 #808080, inset 2px 2px 0 #fff"><svg width="7" height="4" viewBox="0 0 7 4" style="left:4px;top:6px" shape-rendering="crispEdges"><path d="M0,0h7v1h-1v1h-1v1h-1v1h-1v-1h-1v-1h-1v-1h-1z" fill="#000"/></svg></div>
<span id="t68" class="t ms" style="left:504.50px;top:245px;transform:scaleX(0.8494);">8 X</span>
<div style="left:592px;top:240px;width:23px;height:23px;background:#D4D0C8;box-shadow:inset -1px -1px 0 #404040, inset 1px 1px 0 #fff, inset -2px -2px 0 #808080, inset 2px 2px 0 #D4D0C8"><svg width="14" height="16" viewBox="0 0 14 16" style="left:4px;top:3px" shape-rendering="crispEdges"><rect x=".5" y=".5" width="13" height="15" fill="#fff" stroke="#000"/><path d="M3,7v-2h1v-1h3v-2h1v1h1v1h1v1h-1v1h-1v1h-1v-2h-3v2z" fill="#008000"/><path d="M11,8v3h-1v1h-3v2h-1v-1h-1v-1h-1v-1h1v-1h1v-1h1v2h3v-3z" fill="#008000"/></svg></div>
<span id="t69" class="t ms" style="left:502.50px;top:272px;transform:scaleX(0.8130);">Start:</span>
<div style="left:554px;top:268px;width:60px;height:20px;background:#fff;box-shadow:inset 1px 1px 0 #808080, inset -1px -1px 0 #fff, inset 2px 2px 0 #404040, inset -2px -2px 0 #D4D0C8"></div>
<span id="t70" class="t ms" style="left:557.50px;top:270px;transform:scaleX(0.8432);">0000 MB</span>
<span id="t71" class="t ms" style="left:501.64px;top:294px;transform:scaleX(0.8622);">End:</span>
<div style="left:554px;top:291px;width:60px;height:20px;background:#fff;box-shadow:inset 1px 1px 0 #808080, inset -1px -1px 0 #fff, inset 2px 2px 0 #404040, inset -2px -2px 0 #D4D0C8"></div>
<span id="t72" class="t ms" style="left:557.50px;top:293px;transform:scaleX(0.8432);">4480 MB</span>
<div style="left:502px;top:316px;width:13px;height:13px;background:#fff;box-shadow:inset 1px 1px 0 #808080, inset -1px -1px 0 #fff, inset 2px 2px 0 #404040, inset -2px -2px 0 #D4D0C8"></div>
<span id="t73" class="t ms" style="left:520.80px;top:315px;transform:scaleX(0.8646);">Quick scan</span>
<div style="left:502px;top:337px;width:13px;height:13px;background:#fff;box-shadow:inset 1px 1px 0 #808080, inset -1px -1px 0 #fff, inset 2px 2px 0 #404040, inset -2px -2px 0 #D4D0C8"></div>
<div style="left:502px;top:337px;width:13px;height:13px"><svg width="7" height="7" viewBox="0 0 7 7" style="left:3px;top:3px" shape-rendering="crispEdges"><path d="M0,2v3h1v1h1v1h1v-1h1v-1h1v-1h1v-1h1v-3h-1v1h-1v1h-1v1h-1v1h-1v-1h-1v-1z" fill="#000"/></svg></div>
<span id="t74" class="t ms" style="left:520.80px;top:336px;transform:scaleX(0.8581);">Show C1/PIE</span>
<div style="left:502px;top:353px;width:13px;height:13px;background:#fff;box-shadow:inset 1px 1px 0 #808080, inset -1px -1px 0 #fff, inset 2px 2px 0 #404040, inset -2px -2px 0 #D4D0C8"></div>
<div style="left:502px;top:353px;width:13px;height:13px"><svg width="7" height="7" viewBox="0 0 7 7" style="left:3px;top:3px" shape-rendering="crispEdges"><path d="M0,2v3h1v1h1v1h1v-1h1v-1h1v-1h1v-1h1v-3h-1v1h-1v1h-1v1h-1v1h-1v-1h-1v-1z" fill="#000"/></svg></div>
<span id="t75" class="t ms" style="left:520.80px;top:352px;transform:scaleX(0.8473);">Show C2/PIF</span>
<div style="left:502px;top:370px;width:13px;height:13px;background:#fff;box-shadow:inset 1px 1px 0 #808080, inset -1px -1px 0 #fff, inset 2px 2px 0 #404040, inset -2px -2px 0 #D4D0C8"></div>
<div style="left:502px;top:370px;width:13px;height:13px"><svg width="7" height="7" viewBox="0 0 7 7" style="left:3px;top:3px" shape-rendering="crispEdges"><path d="M0,2v3h1v1h1v1h1v-1h1v-1h1v-1h1v-1h1v-3h-1v1h-1v1h-1v1h-1v1h-1v-1h-1v-1z" fill="#000"/></svg></div>
<span id="t76" class="t ms" style="left:520.80px;top:369px;transform:scaleX(0.8352);">Show jitter</span>
<div style="left:502px;top:386px;width:13px;height:13px;background:#fff;box-shadow:inset 1px 1px 0 #808080, inset -1px -1px 0 #fff, inset 2px 2px 0 #404040, inset -2px -2px 0 #D4D0C8"></div>
<div style="left:502px;top:386px;width:13px;height:13px"><svg width="7" height="7" viewBox="0 0 7 7" style="left:3px;top:3px" shape-rendering="crispEdges"><path d="M0,2v3h1v1h1v1h1v-1h1v-1h1v-1h1v-1h1v-3h-1v1h-1v1h-1v1h-1v1h-1v-1h-1v-1z" fill="#000"/></svg></div>
<span id="t77" class="t ms" style="left:520.80px;top:385px;transform:scaleX(0.8445);">Show read speed</span>
<div style="left:502px;top:402px;width:13px;height:13px;background:#D4D0C8;box-shadow:inset 1px 1px 0 #808080, inset -1px -1px 0 #fff, inset 2px 2px 0 #404040, inset -2px -2px 0 #D4D0C8"></div>
<div style="left:502px;top:402px;width:13px;height:13px"><svg width="7" height="7" viewBox="0 0 7 7" style="left:3px;top:3px" shape-rendering="crispEdges"><path d="M0,2v3h1v1h1v1h1v-1h1v-1h1v-1h1v-1h1v-3h-1v1h-1v1h-1v1h-1v1h-1v-1h-1v-1z" fill="#808080"/></svg></div>
<span id="t78" class="t ms" style="left:521.80px;top:402px;color:#fff;transform:scaleX(0.8449);">Show write speed</span>
<span id="t79" class="t ms" style="left:520.80px;top:401px;color:#808080;transform:scaleX(0.8449);">Show write speed</span>
<div style="left:491px;top:427px;width:140px;height:27px;box-shadow:inset 1px 1px 0 #808080, inset -1px -1px 0 #fff, inset 2px 2px 0 #fff, inset -2px -2px 0 #808080"></div>
<span id="t80" class="t ms" style="left:502.50px;top:433px;transform:scaleX(0.8204);">Quality score:</span>
<span id="t81" class="t ms" style="left:608.60px;top:433px;color:#0A0A82;transform:scaleX(0.8171);">97</span>
<div style="left:491px;top:459px;width:140px;height:57px;box-shadow:inset 1px 1px 0 #808080, inset -1px -1px 0 #fff, inset 2px 2px 0 #fff, inset -2px -2px 0 #808080"></div>
<svg width="40" height="40" viewBox="-20 -20 40 40" style="left:576px;top:464px"><defs><radialGradient id="cdg"><stop offset="0.2" stop-color="#e4e2de"/><stop offset="0.8" stop-color="#dad7d1"/><stop offset="1" stop-color="#c4c1ba"/></radialGradient></defs><circle r="18.6" fill="url(#cdg)" stroke="#bdbab3" stroke-width="0.8"/><path d="M0,0L-16,-9A18.4,18.4 0 0 1 -7,-17Z" fill="#f0eeea" opacity=".7"/><path d="M0,0L16,9A18.4,18.4 0 0 1 7,17Z" fill="#c9c6bf" opacity=".6"/><circle r="5.2" fill="#e8e6e2" stroke="#c8c5be" stroke-width="1"/><circle r="2.2" fill="#d4d0c8" stroke="#f4f3f0" stroke-width="1"/></svg>
<span id="t82" class="t ms" style="left:501.78px;top:467px;transform:scaleX(0.8209);">Progress:</span>
<span id="t83" class="t ms" style="left:592.90px;top:467px;color:#0A0A82;transform:scaleX(0.8039);">100 %</span>
<span id="t84" class="t ms" style="left:501.77px;top:483px;transform:scaleX(0.8263);">Position:</span>
<span id="t85" class="t ms" style="left:578.70px;top:483px;color:#0A0A82;transform:scaleX(0.8311);">4479 MB</span>
<span id="t86" class="t ms" style="left:502.60px;top:498px;transform:scaleX(0.8277);">Speed:</span>
<span id="t87" class="t ms" style="left:590.70px;top:498px;color:#0A0A82;transform:scaleX(0.8233);">8.30 X</span>
<div style="left:14px;top:459px;width:147px;height:58px;box-shadow:inset 1px 1px 0 #808080, inset -1px -1px 0 #fff, inset 2px 2px 0 #fff, inset -2px -2px 0 #808080"></div>
<div style="left:24px;top:459px;width:53px;height:2px;background:#D4D0C8"></div>
<div style="left:24px;top:456px;width:8px;height:8px;background:#00FFFF;border:1px solid #000"></div>
<span id="t88" class="t ms" style="left:35.49px;top:452px;transform:scaleX(0.8052);">PI Errors</span>
<span id="t89" class="t ms" style="left:22.50px;top:468px;transform:scaleX(0.8514);">Average:</span>
<span id="t90" class="t ms" style="left:124.30px;top:468px;color:#0A0A82;transform:scaleX(0.8459);">17.28</span>
<span id="t91" class="t ms" style="left:21.69px;top:483px;transform:scaleX(0.8101);">Maximum:</span>
<span id="t92" class="t ms" style="left:138.80px;top:483px;color:#0A0A82;transform:scaleX(0.8601);">53</span>
<span id="t93" class="t ms" style="left:22.50px;top:498px;transform:scaleX(0.8774);">Total:</span>
<span id="t94" class="t ms" style="left:115.00px;top:498px;color:#0A0A82;transform:scaleX(0.8214);">232651</span>
<div style="left:172px;top:459px;width:147px;height:58px;box-shadow:inset 1px 1px 0 #808080, inset -1px -1px 0 #fff, inset 2px 2px 0 #fff, inset -2px -2px 0 #808080"></div>
<div style="left:182px;top:459px;width:62px;height:2px;background:#D4D0C8"></div>
<div style="left:182px;top:456px;width:8px;height:8px;background:#FFFF00;border:1px solid #000"></div>
<span id="t95" class="t ms" style="left:192.98px;top:452px;transform:scaleX(0.8241);">PI Failures</span>
<span id="t96" class="t ms" style="left:181.30px;top:468px;transform:scaleX(0.8514);">Average:</span>
<span id="t97" class="t ms" style="left:288.80px;top:468px;color:#0A0A82;transform:scaleX(0.8492);">0.10</span>
<span id="t98" class="t ms" style="left:180.49px;top:483px;transform:scaleX(0.8136);">Maximum:</span>
<span id="t99" class="t ms" style="left:303.80px;top:483px;color:#0A0A82;transform:scaleX(0.8143);">6</span>
<span id="t100" class="t ms" style="left:181.30px;top:498px;transform:scaleX(0.8910);">Total:</span>
<span id="t101" class="t ms" style="left:285.80px;top:498px;color:#0A0A82;transform:scaleX(0.8801);">1172</span>
<div style="left:331px;top:459px;width:148px;height:44px;box-shadow:inset 1px 1px 0 #808080, inset -1px -1px 0 #fff, inset 2px 2px 0 #fff, inset -2px -2px 0 #808080"></div>
<div style="left:341px;top:459px;width:34px;height:2px;background:#D4D0C8"></div>
<div style="left:341px;top:456px;width:8px;height:8px;background:#FF00FF;border:1px solid #000"></div>
<span id="t102" class="t ms" style="left:352.00px;top:452px;transform:scaleX(0.8097);">Jitter</span>
<span id="t103" class="t ms" style="left:340.00px;top:468px;transform:scaleX(0.8514);">Average:</span>
<span id="t104" class="t ms" style="left:430.50px;top:468px;color:#0A0A82;transform:scaleX(0.8371);">10.28 %</span>
<span id="t105" class="t ms" style="left:339.18px;top:483px;transform:scaleX(0.8243);">Maximum:</span>
<span id="t106" class="t ms" style="left:435.80px;top:483px;color:#0A0A82;transform:scaleX(0.8713);">11.8 %</span>
<span id="t107" class="t ms" style="left:339.67px;top:502px;transform:scaleX(0.8272);">PO failures:</span>
<span id="t108" class="t ms" style="left:463.00px;top:502px;color:#0A0A82;transform:scaleX(0.8286);">0</span>
<span id="t109" class="t wm" style="left:556.00px;top:505px;transform:scaleX(0.5788);">CDRLABS.COM</span>
</div>
</body></html>
